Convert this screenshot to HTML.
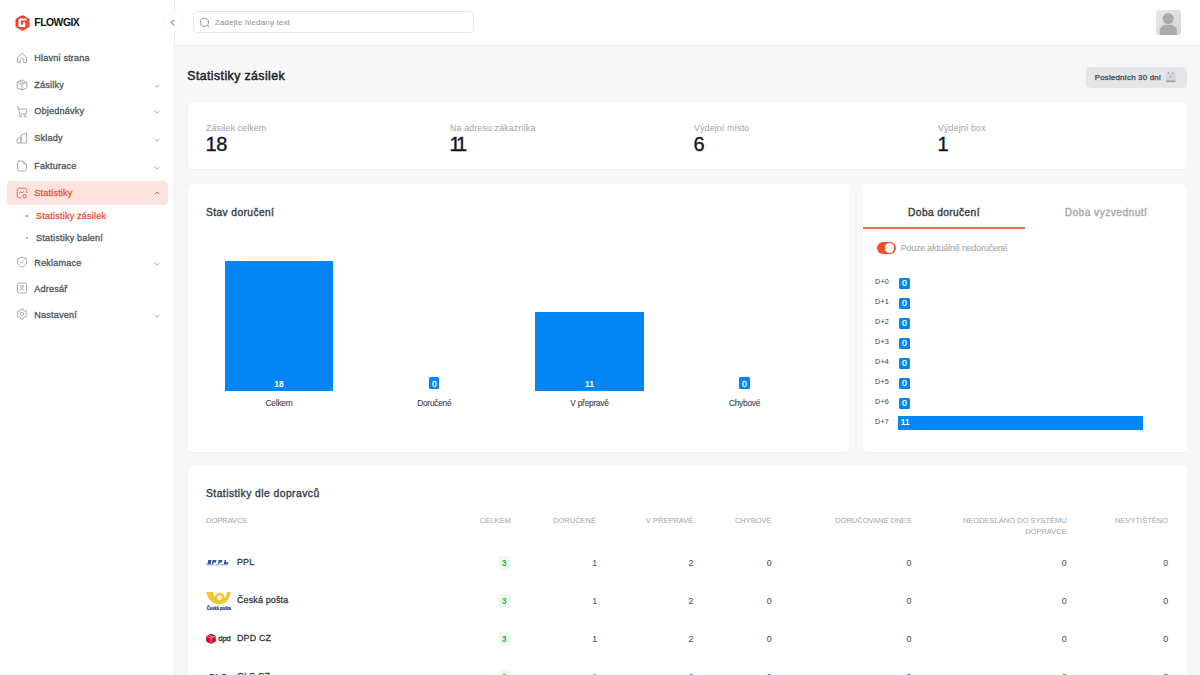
<!DOCTYPE html>
<html><head><meta charset='utf-8'><style>
html,body{margin:0;padding:0;width:1200px;height:675px;overflow:hidden;background:#f7f7f7;font-family:"Liberation Sans",sans-serif;}
.r{position:absolute;}
.t{position:absolute;white-space:nowrap;}
</style></head><body>
<div class='r' style='left:0px;top:0px;width:174px;height:675px;background:#fff;'></div>
<div class='r' style='left:174px;top:0px;width:1px;height:675px;background:#ececec;'></div>
<div class='r' style='left:175px;top:0px;width:1025px;height:45px;background:#fff;'></div>
<div class='r' style='left:175px;top:45px;width:1025px;height:1px;background:#e9e9e9;'></div>
<svg class='r' style='left:15px;top:15px' width='15' height='16' viewBox='0 0 15 16'>
<defs><linearGradient id='lg' x1='0' y1='0' x2='0.3' y2='1'><stop offset='0' stop-color='#d8392c'/><stop offset='1' stop-color='#f6502a'/></linearGradient></defs>
<path d='M6.6 0.5 Q7.5 0 8.4 0.5 L13.6 3.4 Q14.5 3.9 14.5 4.9 L14.5 11.1 Q14.5 12.1 13.6 12.6 L8.4 15.5 Q7.5 16 6.6 15.5 L1.4 12.6 Q0.5 12.1 0.5 11.1 L0.5 4.9 Q0.5 3.9 1.4 3.4 Z' fill='url(#lg)'/>
<path d='M4.9 3.4 L11.6 3.4 L11.6 5.6 L5.9 5.6 L5.9 9.7 L7.9 9.7 L7.9 7.0 L10.2 7.0 L10.2 11.9 L3.5 11.9 L3.5 4.8 Z' fill='#fff'/>
</svg>
<div class='t' style='top:16.96px;font-size:10.4px;line-height:12.48px;font-weight:700;color:#111;letter-spacing:-0.5px;left:34.3px;'>FLOWGIX</div>
<div class='r' style='left:164px;top:12.5px;width:18.5px;height:18.5px;border-radius:50%;background:#fff;box-shadow:0 0 4px rgba(0,0,0,0.035)'></div>
<svg class='r' style='left:169px;top:18px' width='8' height='9' viewBox='0 0 8 9'><path d='M5.4 1.6 L2.3 4.6 L5.4 7.6' fill='none' stroke='#9c9c9c' stroke-width='1.25'/></svg>
<div class='r' style='left:193px;top:11px;width:281px;height:22px;border:1px solid #e6e6e6;border-radius:4px;box-sizing:border-box;background:#fff'></div>
<svg class='r' style='left:199px;top:17px' width='12' height='12' viewBox='0 0 12 12'><circle cx='5.4' cy='5.3' r='4.1' fill='none' stroke='#8f8f8f' stroke-width='0.95'/><path d='M8.4 8.4 L10 10' stroke='#8f8f8f' stroke-width='0.95' stroke-linecap='round'/></svg>
<div class='t' style='top:18.33px;font-size:8.1px;line-height:9.72px;font-weight:400;color:#9d9d9d;letter-spacing:0.12px;left:214.7px;-webkit-text-stroke:0.12px #9d9d9d;'>Zadejte hledaný text</div>
<div class='r' style='left:1156px;top:10px;width:25px;height:25px;border-radius:3px;background:linear-gradient(135deg,#e8e8e8,#d6d6d6);overflow:hidden'>
<svg width='25' height='25' viewBox='0 0 25 25' style='position:absolute;left:0;top:0'><circle cx='12.2' cy='8.6' r='5.6' fill='#ababab'/><path d='M3.8 25 V20.5 C3.8 16.8 7 14.8 12.2 14.8 C17.4 14.8 20.8 16.8 20.8 20.5 V25 Z' fill='#ababab'/></svg></div>
<svg class='r' style='left:15.5px;top:51.8px' width='12' height='12' viewBox='0 0 12 12'><path d='M1.5 10.5 V5.2 L6 1.2 L10.5 5.2 V10.5 H7.6 V7.6 C7.6 6.6 6.8 6.2 6 6.2 C5.2 6.2 4.4 6.6 4.4 7.6 V10.5 Z' fill='none' stroke='#a3a3a3' stroke-width='0.9' stroke-linejoin='round'/></svg>
<div class='t' style='top:53.39px;font-size:9.1px;line-height:10.92px;font-weight:400;color:#4f545c;left:34.2px;-webkit-text-stroke:0.3px #4f545c;letter-spacing:0.2px;'>Hlavni strana</div>
<svg class='r' style='left:15.5px;top:79.2px' width='12' height='12' viewBox='0 0 12 12'><path d='M6 1 L10.8 3.2 V8.8 L6 11 L1.2 8.8 V3.2 Z M1.2 3.2 L6 5.4 L10.8 3.2 M6 5.4 V11 M3.6 2.1 L8.4 4.3' fill='none' stroke='#a3a3a3' stroke-width='0.9' stroke-linejoin='round'/></svg>
<div class='t' style='top:79.79px;font-size:9.1px;line-height:10.92px;font-weight:400;color:#4f545c;left:34.2px;-webkit-text-stroke:0.3px #4f545c;letter-spacing:0.2px;'>Zásilky</div>
<svg class='r' style='left:153.5px;top:84.0px' width='6' height='4.5' viewBox='0 0 6 4.5'><path d='M0.8 1 L3 3.2 L5.2 1' fill='none' stroke='#9a9a9a' stroke-width='0.9'/></svg>
<svg class='r' style='left:15.5px;top:105.89999999999999px' width='12' height='12' viewBox='0 0 12 12'><path d='M0.8 1.2 H2.4 L3.6 8 H10 L11 3.2 H3' fill='none' stroke='#a3a3a3' stroke-width='0.9' stroke-linejoin='round'/><circle cx='4.4' cy='10.2' r='1' fill='none' stroke='#a3a3a3' stroke-width='0.9'/><circle cx='9' cy='10.2' r='1' fill='none' stroke='#a3a3a3' stroke-width='0.9'/></svg>
<div class='t' style='top:105.99px;font-size:9.1px;line-height:10.92px;font-weight:400;color:#4f545c;left:34.2px;-webkit-text-stroke:0.3px #4f545c;letter-spacing:0.2px;'>Objednávky</div>
<svg class='r' style='left:153.5px;top:110.19999999999999px' width='6' height='4.5' viewBox='0 0 6 4.5'><path d='M0.8 1 L3 3.2 L5.2 1' fill='none' stroke='#9a9a9a' stroke-width='0.9'/></svg>
<svg class='r' style='left:15.5px;top:131.8px' width='12' height='12' viewBox='0 0 12 12'><path d='M1 11 V7 L5 5 V11 M5 11 V3.5 L10.5 1 V11 H1 M3 9 H3.1 M7.5 9 H7.6' fill='none' stroke='#a3a3a3' stroke-width='0.9' stroke-linejoin='round'/></svg>
<div class='t' style='top:133.39px;font-size:9.1px;line-height:10.92px;font-weight:400;color:#4f545c;left:34.2px;-webkit-text-stroke:0.3px #4f545c;letter-spacing:0.2px;'>Sklady</div>
<svg class='r' style='left:153.5px;top:137.6px' width='6' height='4.5' viewBox='0 0 6 4.5'><path d='M0.8 1 L3 3.2 L5.2 1' fill='none' stroke='#9a9a9a' stroke-width='0.9'/></svg>
<svg class='r' style='left:15.5px;top:159.8px' width='12' height='12' viewBox='0 0 12 12'><path d='M2.5 1 H7 L10.5 4.5 V9 C10.5 10.2 9.7 11 8.5 11 H3.5 C2.3 11 1.5 10.2 1.5 9 V3 C1.5 1.8 2.3 1 3.5 1 M7 1 C7 3.5 8 4.5 10.5 4.5' fill='none' stroke='#a3a3a3' stroke-width='0.9' stroke-linejoin='round'/></svg>
<div class='t' style='top:161.39px;font-size:9.1px;line-height:10.92px;font-weight:400;color:#4f545c;left:34.2px;-webkit-text-stroke:0.3px #4f545c;letter-spacing:0.2px;'>Fakturace</div>
<svg class='r' style='left:153.5px;top:165.6px' width='6' height='4.5' viewBox='0 0 6 4.5'><path d='M0.8 1 L3 3.2 L5.2 1' fill='none' stroke='#9a9a9a' stroke-width='0.9'/></svg>
<div class='r' style='left:7px;top:181px;width:161px;height:24px;background:#fde3dd;border-radius:4px;'></div>
<svg class='r' style='left:15.5px;top:186.5px' width='12' height='12' viewBox='0 0 12 12'><path d='M5 11 H3.2 C2 11 1.2 10.2 1.2 9 V3.2 C1.2 2 2 1.2 3.2 1.2 H8.8 C10 1.2 10.8 2 10.8 3.2 V6' fill='none' stroke='#e0604d' stroke-width='0.9'/><path d='M3.2 6.2 L4.8 4.8 L6 6 L7.8 4.6' fill='none' stroke='#e0604d' stroke-width='0.9' stroke-linecap='round'/><circle cx='8.6' cy='9.2' r='1.7' fill='none' stroke='#e0604d' stroke-width='1'/></svg>
<div class='t' style='top:187.59px;font-size:9.1px;line-height:10.92px;font-weight:400;color:#e8523c;left:34.2px;-webkit-text-stroke:0.3px #e8523c;letter-spacing:0.2px;'>Statistiky</div>
<svg class='r' style='left:153.5px;top:191px' width='6' height='4.5' viewBox='0 0 6 4.5'><path d='M0.8 3.2 L3 1 L5.2 3.2' fill='none' stroke='#e0604d' stroke-width='0.9'/></svg>
<div class='r' style='left:26px;top:215px;width:2px;height:2px;background:#e8523c;border-radius:1px;'></div>
<div class='t' style='top:210.59px;font-size:9.1px;line-height:10.92px;font-weight:400;color:#e8523c;left:36px;-webkit-text-stroke:0.3px #e8523c;letter-spacing:0.2px;'>Statistiky zásilek</div>
<div class='r' style='left:26px;top:237px;width:2px;height:2px;background:#9ca3af;border-radius:1px;'></div>
<div class='t' style='top:232.59px;font-size:9.1px;line-height:10.92px;font-weight:400;color:#4f545c;left:36px;-webkit-text-stroke:0.3px #4f545c;letter-spacing:0.2px;'>Statistiky balení</div>
<svg class='r' style='left:15.5px;top:256.0px' width='12' height='12' viewBox='0 0 12 12'><path d='M6 1 L10.5 2.8 V6 C10.5 8.6 8.6 10.4 6 11.2 C3.4 10.4 1.5 8.6 1.5 6 V2.8 Z' fill='none' stroke='#a3a3a3' stroke-width='0.9' stroke-linejoin='round'/><path d='M4.3 6.1 L5.5 7.2 L7.8 4.9' fill='none' stroke='#a3a3a3' stroke-width='0.9' stroke-linecap='round'/></svg>
<div class='t' style='top:257.59px;font-size:9.1px;line-height:10.92px;font-weight:400;color:#4f545c;left:34.2px;-webkit-text-stroke:0.3px #4f545c;letter-spacing:0.2px;'>Reklamace</div>
<svg class='r' style='left:153.5px;top:261.8px' width='6' height='4.5' viewBox='0 0 6 4.5'><path d='M0.8 1 L3 3.2 L5.2 1' fill='none' stroke='#9a9a9a' stroke-width='0.9'/></svg>
<svg class='r' style='left:15.5px;top:282.0px' width='12' height='12' viewBox='0 0 12 12'><rect x='1.5' y='1' width='9' height='10' rx='1.5' fill='none' stroke='#a3a3a3' stroke-width='0.9'/><circle cx='6' cy='4.8' r='1.4' fill='none' stroke='#a3a3a3' stroke-width='0.9'/><path d='M3.8 8.8 C4.2 7.6 5 7.1 6 7.1 C7 7.1 7.8 7.6 8.2 8.8' fill='none' stroke='#a3a3a3' stroke-width='0.9'/><path d='M0.6 3.5 H1.5 M0.6 6 H1.5 M0.6 8.5 H1.5' stroke='#a3a3a3' stroke-width='0.8'/></svg>
<div class='t' style='top:283.59px;font-size:9.1px;line-height:10.92px;font-weight:400;color:#4f545c;left:34.2px;-webkit-text-stroke:0.3px #4f545c;letter-spacing:0.2px;'>Adresář</div>
<svg class='r' style='left:15.5px;top:308.2px' width='12' height='12' viewBox='0 0 12 12'><path d='M5 1 H7 L7.4 2.5 L8.6 3.2 L10 2.7 L11 4.5 L9.9 5.4 V6.6 L11 7.5 L10 9.3 L8.6 8.8 L7.4 9.5 L7 11 H5 L4.6 9.5 L3.4 8.8 L2 9.3 L1 7.5 L2.1 6.6 V5.4 L1 4.5 L2 2.7 L3.4 3.2 L4.6 2.5 Z' fill='none' stroke='#a3a3a3' stroke-width='0.9' stroke-linejoin='round'/><circle cx='6' cy='6' r='1.7' fill='none' stroke='#a3a3a3' stroke-width='0.9'/></svg>
<div class='t' style='top:309.79px;font-size:9.1px;line-height:10.92px;font-weight:400;color:#4f545c;left:34.2px;-webkit-text-stroke:0.3px #4f545c;letter-spacing:0.2px;'>Nastavení</div>
<svg class='r' style='left:153.5px;top:314.0px' width='6' height='4.5' viewBox='0 0 6 4.5'><path d='M0.8 1 L3 3.2 L5.2 1' fill='none' stroke='#9a9a9a' stroke-width='0.9'/></svg>
<div class='t' style='top:69.46px;font-size:12.3px;line-height:14.76px;font-weight:400;color:#1f2329;letter-spacing:0.42px;left:187.3px;-webkit-text-stroke:0.48px #1f2329;'>Statistiky zásilek</div>
<div class='r' style='left:1086px;top:67px;width:101px;height:21px;background:#e4e5e9;border-radius:4px;'></div>
<div class='t' style='top:72.72px;font-size:7.9px;line-height:9.48px;font-weight:400;color:#3a3f47;letter-spacing:0.2px;left:1094.7px;-webkit-text-stroke:0.25px #3a3f47;'>Posledních 30 dní</div>
<svg class='r' style='left:1164px;top:71px' width='13' height='12' viewBox='0 0 13 12'>
<rect x='1.9' y='1.4' width='9.7' height='9.9' rx='2' fill='#d6d7dc'/>
<rect x='1.9' y='9.2' width='9.7' height='2.1' rx='1' fill='#a4a6ab'/>
<rect x='3.8' y='0.7' width='1.1' height='2.2' rx='0.5' fill='#a4a6ab'/><rect x='8.3' y='0.7' width='1.1' height='2.2' rx='0.5' fill='#a4a6ab'/>
<rect x='5.9' y='4.2' width='1.3' height='2.2' fill='#a9abb0'/></svg>
<div class='r' style='left:188px;top:103px;width:999px;height:66px;background:#fff;border-radius:5px;box-shadow:0 1px 2px rgba(0,0,0,0.03);'></div>
<div class='t' style='top:122.68px;font-size:8.9px;line-height:10.68px;font-weight:400;color:#a3a3a3;letter-spacing:0.12px;left:206px;'>Zásilek celkem</div>
<div class='t' style='top:132.07px;font-size:20px;line-height:24.0px;font-weight:400;color:#111827;letter-spacing:-0.3px;left:205.5px;-webkit-text-stroke:0.4px #111827;'>18</div>
<div class='t' style='top:122.68px;font-size:8.9px;line-height:10.68px;font-weight:400;color:#a3a3a3;letter-spacing:0.12px;left:450px;'>Na adresu zákazníka</div>
<div class='t' style='top:132.07px;font-size:20px;line-height:24.0px;font-weight:400;color:#111827;letter-spacing:-3.2px;left:449.5px;-webkit-text-stroke:0.4px #111827;'>11</div>
<div class='t' style='top:122.68px;font-size:8.9px;line-height:10.68px;font-weight:400;color:#a3a3a3;letter-spacing:0.12px;left:694px;'>Výdejní místo</div>
<div class='t' style='top:132.07px;font-size:20px;line-height:24.0px;font-weight:400;color:#111827;letter-spacing:-0.3px;left:693.5px;-webkit-text-stroke:0.4px #111827;'>6</div>
<div class='t' style='top:122.68px;font-size:8.9px;line-height:10.68px;font-weight:400;color:#a3a3a3;letter-spacing:0.12px;left:938px;'>Výdejní box</div>
<div class='t' style='top:132.07px;font-size:20px;line-height:24.0px;font-weight:400;color:#111827;letter-spacing:-0.3px;left:937.5px;-webkit-text-stroke:0.4px #111827;'>1</div>
<div class='r' style='left:188px;top:184px;width:661px;height:268px;background:#fff;border-radius:5px;box-shadow:0 1px 2px rgba(0,0,0,0.03);'></div>
<div class='t' style='top:206.65px;font-size:10.2px;line-height:12.24px;font-weight:400;color:#3a3f47;letter-spacing:0.42px;left:206px;-webkit-text-stroke:0.38px #3a3f47;'>Stav doručení</div>
<div class='r' style='left:224.7px;top:261px;width:108.6px;height:130px;background:#0386f3;'></div>
<div class='t' style='top:378.65px;font-size:8.5px;line-height:10.2px;font-weight:700;color:#fff;left:129px;width:300px;text-align:center;'>18</div>
<div class='t' style='top:399.14px;font-size:8.3px;line-height:9.96px;font-weight:400;color:#3c4043;letter-spacing:-0.22px;left:129px;width:300px;text-align:center;-webkit-text-stroke:0.1px #3c4043;'>Celkem</div>
<div class='r' style='left:429.2px;top:377.3px;width:10.2px;height:11.4px;background:#0386f3;border-radius:1.5px;'></div>
<div class='t' style='top:378.56px;font-size:8.6px;line-height:10.32px;font-weight:400;color:#fff;left:284.3px;width:300px;text-align:center;-webkit-text-stroke:0.25px #fff;'>0</div>
<div class='t' style='top:399.14px;font-size:8.3px;line-height:9.96px;font-weight:400;color:#3c4043;letter-spacing:-0.22px;left:284.3px;width:300px;text-align:center;-webkit-text-stroke:0.1px #3c4043;'>Doručené</div>
<div class='r' style='left:535.2px;top:312px;width:108.6px;height:79px;background:#0386f3;'></div>
<div class='t' style='top:378.65px;font-size:8.5px;line-height:10.2px;font-weight:700;color:#fff;left:439.5px;width:300px;text-align:center;'>11</div>
<div class='t' style='top:399.14px;font-size:8.3px;line-height:9.96px;font-weight:400;color:#3c4043;letter-spacing:-0.22px;left:439.5px;width:300px;text-align:center;-webkit-text-stroke:0.1px #3c4043;'>V přepravě</div>
<div class='r' style='left:739.4px;top:377.3px;width:10.2px;height:11.4px;background:#0386f3;border-radius:1.5px;'></div>
<div class='t' style='top:378.56px;font-size:8.6px;line-height:10.32px;font-weight:400;color:#fff;left:594.5px;width:300px;text-align:center;-webkit-text-stroke:0.25px #fff;'>0</div>
<div class='t' style='top:399.14px;font-size:8.3px;line-height:9.96px;font-weight:400;color:#3c4043;letter-spacing:-0.22px;left:594.5px;width:300px;text-align:center;-webkit-text-stroke:0.1px #3c4043;'>Chybové</div>
<div class='r' style='left:863px;top:184px;width:324px;height:268px;background:#fff;border-radius:5px;box-shadow:0 1px 2px rgba(0,0,0,0.03);'></div>
<div class='t' style='top:207.05px;font-size:10.2px;line-height:12.24px;font-weight:400;color:#3a3f47;letter-spacing:0.38px;left:794px;width:300px;text-align:center;-webkit-text-stroke:0.4px #3a3f47;'>Doba doručení</div>
<div class='t' style='top:207.05px;font-size:10.2px;line-height:12.24px;font-weight:400;color:#a6abb3;letter-spacing:0.45px;left:956px;width:300px;text-align:center;-webkit-text-stroke:0.4px #a6abb3;'>Doba vyzvednutí</div>
<div class='r' style='left:863px;top:227.1px;width:162px;height:1.6px;background:#ea6f56;'></div>
<div class='r' style='left:876.7px;top:241.6px;width:19px;height:12.8px;background:#ef4f2b;border-radius:7px;'></div>
<div class='r' style='left:884.6px;top:243.2px;width:9.6px;height:9.6px;background:#fff;border-radius:50%;'></div>
<div class='t' style='top:242.97px;font-size:8.8px;line-height:10.56px;font-weight:400;color:#a8a8a8;letter-spacing:-0.12px;left:900.7px;-webkit-text-stroke:0.12px #a8a8a8;'>Pouze aktuálně nedoručené</div>
<div class='t' style='top:278.09px;font-size:7.3px;line-height:8.76px;font-weight:400;color:#3c4043;letter-spacing:0.1px;right:311px;text-align:right;'>D+0</div>
<div class='r' style='left:899.2px;top:277.5px;width:10.4px;height:11px;background:#0386f3;border-radius:1.5px;'></div>
<div class='t' style='top:278.36px;font-size:8.6px;line-height:10.32px;font-weight:400;color:#fff;left:754.4px;width:300px;text-align:center;-webkit-text-stroke:0.25px #fff;'>0</div>
<div class='t' style='top:298.09px;font-size:7.3px;line-height:8.76px;font-weight:400;color:#3c4043;letter-spacing:0.1px;right:311px;text-align:right;'>D+1</div>
<div class='r' style='left:899.2px;top:297.5px;width:10.4px;height:11px;background:#0386f3;border-radius:1.5px;'></div>
<div class='t' style='top:298.36px;font-size:8.6px;line-height:10.32px;font-weight:400;color:#fff;left:754.4px;width:300px;text-align:center;-webkit-text-stroke:0.25px #fff;'>0</div>
<div class='t' style='top:318.09px;font-size:7.3px;line-height:8.76px;font-weight:400;color:#3c4043;letter-spacing:0.1px;right:311px;text-align:right;'>D+2</div>
<div class='r' style='left:899.2px;top:317.5px;width:10.4px;height:11px;background:#0386f3;border-radius:1.5px;'></div>
<div class='t' style='top:318.36px;font-size:8.6px;line-height:10.32px;font-weight:400;color:#fff;left:754.4px;width:300px;text-align:center;-webkit-text-stroke:0.25px #fff;'>0</div>
<div class='t' style='top:338.09px;font-size:7.3px;line-height:8.76px;font-weight:400;color:#3c4043;letter-spacing:0.1px;right:311px;text-align:right;'>D+3</div>
<div class='r' style='left:899.2px;top:337.5px;width:10.4px;height:11px;background:#0386f3;border-radius:1.5px;'></div>
<div class='t' style='top:338.36px;font-size:8.6px;line-height:10.32px;font-weight:400;color:#fff;left:754.4px;width:300px;text-align:center;-webkit-text-stroke:0.25px #fff;'>0</div>
<div class='t' style='top:358.09px;font-size:7.3px;line-height:8.76px;font-weight:400;color:#3c4043;letter-spacing:0.1px;right:311px;text-align:right;'>D+4</div>
<div class='r' style='left:899.2px;top:357.5px;width:10.4px;height:11px;background:#0386f3;border-radius:1.5px;'></div>
<div class='t' style='top:358.36px;font-size:8.6px;line-height:10.32px;font-weight:400;color:#fff;left:754.4px;width:300px;text-align:center;-webkit-text-stroke:0.25px #fff;'>0</div>
<div class='t' style='top:378.09px;font-size:7.3px;line-height:8.76px;font-weight:400;color:#3c4043;letter-spacing:0.1px;right:311px;text-align:right;'>D+5</div>
<div class='r' style='left:899.2px;top:377.5px;width:10.4px;height:11px;background:#0386f3;border-radius:1.5px;'></div>
<div class='t' style='top:378.36px;font-size:8.6px;line-height:10.32px;font-weight:400;color:#fff;left:754.4px;width:300px;text-align:center;-webkit-text-stroke:0.25px #fff;'>0</div>
<div class='t' style='top:398.09px;font-size:7.3px;line-height:8.76px;font-weight:400;color:#3c4043;letter-spacing:0.1px;right:311px;text-align:right;'>D+6</div>
<div class='r' style='left:899.2px;top:397.5px;width:10.4px;height:11px;background:#0386f3;border-radius:1.5px;'></div>
<div class='t' style='top:398.36px;font-size:8.6px;line-height:10.32px;font-weight:400;color:#fff;left:754.4px;width:300px;text-align:center;-webkit-text-stroke:0.25px #fff;'>0</div>
<div class='t' style='top:418.09px;font-size:7.3px;line-height:8.76px;font-weight:400;color:#3c4043;letter-spacing:0.1px;right:311px;text-align:right;'>D+7</div>
<div class='r' style='left:898.2px;top:416px;width:244.8px;height:14px;background:#0386f3;'></div>
<div class='t' style='top:418.14px;font-size:8.2px;line-height:9.84px;font-weight:700;color:#fff;left:900.8px;'>11</div>
<div class='r' style='left:188px;top:465px;width:999px;height:260px;background:#fff;border-radius:5px;box-shadow:0 1px 2px rgba(0,0,0,0.03);'></div>
<div class='t' style='top:487.56px;font-size:10.4px;line-height:12.48px;font-weight:400;color:#3a3f47;letter-spacing:0.42px;left:206px;-webkit-text-stroke:0.38px #3a3f47;'>Statistiky dle dopravců</div>
<div class='t' style='top:515.60px;font-size:7.5px;line-height:9.0px;font-weight:400;color:#a8a8a8;left:206px;-webkit-text-stroke:0.05px #a8a8a8;'>DOPRAVCE</div>
<div class='t' style='top:515.60px;font-size:7.5px;line-height:9.0px;font-weight:400;color:#a8a8a8;right:689.3px;text-align:right;-webkit-text-stroke:0.05px #a8a8a8;'>CELKEM</div>
<div class='t' style='top:515.60px;font-size:7.5px;line-height:9.0px;font-weight:400;color:#a8a8a8;right:604px;text-align:right;-webkit-text-stroke:0.05px #a8a8a8;'>DORUČENÉ</div>
<div class='t' style='top:515.60px;font-size:7.5px;line-height:9.0px;font-weight:400;color:#a8a8a8;right:506.70000000000005px;text-align:right;-webkit-text-stroke:0.05px #a8a8a8;'>V PŘEPRAVĚ</div>
<div class='t' style='top:515.60px;font-size:7.5px;line-height:9.0px;font-weight:400;color:#a8a8a8;right:428.4px;text-align:right;-webkit-text-stroke:0.05px #a8a8a8;'>CHYBOVÉ</div>
<div class='t' style='top:515.60px;font-size:7.5px;line-height:9.0px;font-weight:400;color:#a8a8a8;right:288.70000000000005px;text-align:right;-webkit-text-stroke:0.05px #a8a8a8;'>DORUČOVANÉ DNES</div>
<div class='t' style='top:515.60px;font-size:7.5px;line-height:9.0px;font-weight:400;color:#a8a8a8;right:133.29999999999995px;text-align:right;-webkit-text-stroke:0.05px #a8a8a8;'>NEODESLÁNO DO SYSTÉMU</div>
<div class='t' style='top:515.60px;font-size:7.5px;line-height:9.0px;font-weight:400;color:#a8a8a8;right:32px;text-align:right;-webkit-text-stroke:0.05px #a8a8a8;'>NEVYTIŠTĚNO</div>
<div class='t' style='top:527.10px;font-size:7.5px;line-height:9.0px;font-weight:400;color:#a8a8a8;right:133.29999999999995px;text-align:right;-webkit-text-stroke:0.05px #a8a8a8;'>DOPRAVCE</div>
<div class='t' style='top:557.08px;font-size:8.9px;line-height:10.68px;font-weight:400;color:#35393f;letter-spacing:0.18px;left:237px;-webkit-text-stroke:0.28px #35393f;'>PPL</div>
<div class='r' style='left:497.5px;top:555.5px;width:13.5px;height:14.5px;background:#effaf2;border-radius:3px;'></div>
<div class='t' style='top:557.65px;font-size:8.5px;line-height:10.2px;font-weight:700;color:#22b455;left:354.2px;width:300px;text-align:center;'>3</div>
<div class='t' style='top:557.82px;font-size:8.75px;line-height:10.5px;font-weight:400;color:#52565c;right:603px;text-align:right;-webkit-text-stroke:0.1px #52565c;'>1</div>
<div class='t' style='top:557.82px;font-size:8.75px;line-height:10.5px;font-weight:400;color:#52565c;right:506.70000000000005px;text-align:right;-webkit-text-stroke:0.1px #52565c;'>2</div>
<div class='t' style='top:557.82px;font-size:8.75px;line-height:10.5px;font-weight:400;color:#52565c;right:428.4px;text-align:right;-webkit-text-stroke:0.1px #52565c;'>0</div>
<div class='t' style='top:557.82px;font-size:8.75px;line-height:10.5px;font-weight:400;color:#52565c;right:288.70000000000005px;text-align:right;-webkit-text-stroke:0.1px #52565c;'>0</div>
<div class='t' style='top:557.82px;font-size:8.75px;line-height:10.5px;font-weight:400;color:#52565c;right:133.29999999999995px;text-align:right;-webkit-text-stroke:0.1px #52565c;'>0</div>
<div class='t' style='top:557.82px;font-size:8.75px;line-height:10.5px;font-weight:400;color:#52565c;right:32px;text-align:right;-webkit-text-stroke:0.1px #52565c;'>0</div>
<div class='t' style='top:595.08px;font-size:8.9px;line-height:10.68px;font-weight:400;color:#35393f;letter-spacing:0.18px;left:237px;-webkit-text-stroke:0.28px #35393f;'>Česká pošta</div>
<div class='r' style='left:497.5px;top:593.5px;width:13.5px;height:14.5px;background:#effaf2;border-radius:3px;'></div>
<div class='t' style='top:595.65px;font-size:8.5px;line-height:10.2px;font-weight:700;color:#22b455;left:354.2px;width:300px;text-align:center;'>3</div>
<div class='t' style='top:595.82px;font-size:8.75px;line-height:10.5px;font-weight:400;color:#52565c;right:603px;text-align:right;-webkit-text-stroke:0.1px #52565c;'>1</div>
<div class='t' style='top:595.82px;font-size:8.75px;line-height:10.5px;font-weight:400;color:#52565c;right:506.70000000000005px;text-align:right;-webkit-text-stroke:0.1px #52565c;'>2</div>
<div class='t' style='top:595.82px;font-size:8.75px;line-height:10.5px;font-weight:400;color:#52565c;right:428.4px;text-align:right;-webkit-text-stroke:0.1px #52565c;'>0</div>
<div class='t' style='top:595.82px;font-size:8.75px;line-height:10.5px;font-weight:400;color:#52565c;right:288.70000000000005px;text-align:right;-webkit-text-stroke:0.1px #52565c;'>0</div>
<div class='t' style='top:595.82px;font-size:8.75px;line-height:10.5px;font-weight:400;color:#52565c;right:133.29999999999995px;text-align:right;-webkit-text-stroke:0.1px #52565c;'>0</div>
<div class='t' style='top:595.82px;font-size:8.75px;line-height:10.5px;font-weight:400;color:#52565c;right:32px;text-align:right;-webkit-text-stroke:0.1px #52565c;'>0</div>
<div class='t' style='top:633.08px;font-size:8.9px;line-height:10.68px;font-weight:400;color:#35393f;letter-spacing:0.18px;left:237px;-webkit-text-stroke:0.28px #35393f;'>DPD CZ</div>
<div class='r' style='left:497.5px;top:631.5px;width:13.5px;height:14.5px;background:#effaf2;border-radius:3px;'></div>
<div class='t' style='top:633.65px;font-size:8.5px;line-height:10.2px;font-weight:700;color:#22b455;left:354.2px;width:300px;text-align:center;'>3</div>
<div class='t' style='top:633.82px;font-size:8.75px;line-height:10.5px;font-weight:400;color:#52565c;right:603px;text-align:right;-webkit-text-stroke:0.1px #52565c;'>1</div>
<div class='t' style='top:633.82px;font-size:8.75px;line-height:10.5px;font-weight:400;color:#52565c;right:506.70000000000005px;text-align:right;-webkit-text-stroke:0.1px #52565c;'>2</div>
<div class='t' style='top:633.82px;font-size:8.75px;line-height:10.5px;font-weight:400;color:#52565c;right:428.4px;text-align:right;-webkit-text-stroke:0.1px #52565c;'>0</div>
<div class='t' style='top:633.82px;font-size:8.75px;line-height:10.5px;font-weight:400;color:#52565c;right:288.70000000000005px;text-align:right;-webkit-text-stroke:0.1px #52565c;'>0</div>
<div class='t' style='top:633.82px;font-size:8.75px;line-height:10.5px;font-weight:400;color:#52565c;right:133.29999999999995px;text-align:right;-webkit-text-stroke:0.1px #52565c;'>0</div>
<div class='t' style='top:633.82px;font-size:8.75px;line-height:10.5px;font-weight:400;color:#52565c;right:32px;text-align:right;-webkit-text-stroke:0.1px #52565c;'>0</div>
<div class='t' style='top:671.08px;font-size:8.9px;line-height:10.68px;font-weight:400;color:#35393f;letter-spacing:0.18px;left:237px;-webkit-text-stroke:0.28px #35393f;'>GLS CZ</div>
<div class='r' style='left:497.5px;top:669.5px;width:13.5px;height:14.5px;background:#effaf2;border-radius:3px;'></div>
<div class='t' style='top:671.65px;font-size:8.5px;line-height:10.2px;font-weight:700;color:#22b455;left:354.2px;width:300px;text-align:center;'>3</div>
<div class='t' style='top:671.82px;font-size:8.75px;line-height:10.5px;font-weight:400;color:#52565c;right:603px;text-align:right;-webkit-text-stroke:0.1px #52565c;'>1</div>
<div class='t' style='top:671.82px;font-size:8.75px;line-height:10.5px;font-weight:400;color:#52565c;right:506.70000000000005px;text-align:right;-webkit-text-stroke:0.1px #52565c;'>2</div>
<div class='t' style='top:671.82px;font-size:8.75px;line-height:10.5px;font-weight:400;color:#52565c;right:428.4px;text-align:right;-webkit-text-stroke:0.1px #52565c;'>0</div>
<div class='t' style='top:671.82px;font-size:8.75px;line-height:10.5px;font-weight:400;color:#52565c;right:288.70000000000005px;text-align:right;-webkit-text-stroke:0.1px #52565c;'>0</div>
<div class='t' style='top:671.82px;font-size:8.75px;line-height:10.5px;font-weight:400;color:#52565c;right:133.29999999999995px;text-align:right;-webkit-text-stroke:0.1px #52565c;'>0</div>
<div class='t' style='top:671.82px;font-size:8.75px;line-height:10.5px;font-weight:400;color:#52565c;right:32px;text-align:right;-webkit-text-stroke:0.1px #52565c;'>0</div>
<svg class='r' style='left:205px;top:558px' width='26' height='10' viewBox='0 0 26 10'>
<g fill='#2f5a9e'>
<path d='M2.4 5.9 L3.2 2.1 L6.6 2.1 L5.8 5.9 Z'/>
<path d='M6.8 5.9 L7.6 2.1 L11.4 2.1 L10.9 4.4 L8.6 4.4 L8.3 5.9 Z'/>
<path d='M12.9 5.9 L13.7 2.1 L17.5 2.1 L17.0 4.4 L14.7 4.4 L14.4 5.9 Z'/>
<path d='M18.8 5.9 L19.6 2.1 L21.2 2.1 L20.7 4.3 L23.4 4.3 L23.1 5.9 Z'/>
</g>
<path d='M1.2 6.8 H9.4 M10.4 6.8 H14.2 M15.2 6.8 H22.8' stroke='#6d8bbd' stroke-width='0.9'/>
<circle cx='24.8' cy='2.6' r='0.5' fill='#9fb0cc'/>
</svg>
<svg class='r' style='left:205px;top:590px' width='27' height='22' viewBox='0 0 27 22'>
<path d='M1.2 2 L8.2 2 C8.4 6.6 10.8 9.6 14.6 9.6 C18.6 9.6 21.6 6.6 22.0 2 L25.6 2 C25 9.4 20.6 14.2 14.2 14.2 C7.6 14.2 2.8 9.4 1.2 2 Z' fill='#f7c52d'/>
<circle cx='14.6' cy='7.4' r='4.6' fill='#f7c52d'/><circle cx='14.6' cy='7.8' r='2.4' fill='#fff'/>
<text x='1.8' y='19.6' font-family='Liberation Sans' font-weight='700' font-size='4.7' fill='#1a357e' stroke='#1a357e' stroke-width='0.2' textLength='24' lengthAdjust='spacingAndGlyphs'>Česká pošta</text></svg>
<svg class='r' style='left:205px;top:632px' width='27' height='13' viewBox='0 0 27 13'>
<path d='M6 1.6 L10.8 3.9 V9.4 L6 11.9 L1.2 9.4 V3.9 Z' fill='#d0063a'/>
<path d='M1.4 4.0 L6 6.3 L10.6 4.0 M6 6.3 V11.7 M3.6 2.8 L8.2 5.1' fill='none' stroke='#fff' stroke-width='0.55'/>
<text x='13.2' y='9.4' font-family='Liberation Sans' font-size='7.2' fill='#3d3d3d' textLength='12.6' lengthAdjust='spacingAndGlyphs' stroke='#3d3d3d' stroke-width='0.35'>dpd</text></svg>
<svg class='r' style='left:205px;top:670px' width='27' height='10' viewBox='0 0 27 10'>
<text x='2.9' y='9.6' font-family='Liberation Sans' font-weight='700' font-size='9.5' fill='#0a1aa8' textLength='19' lengthAdjust='spacingAndGlyphs'>GLS</text></svg>
</body></html>
